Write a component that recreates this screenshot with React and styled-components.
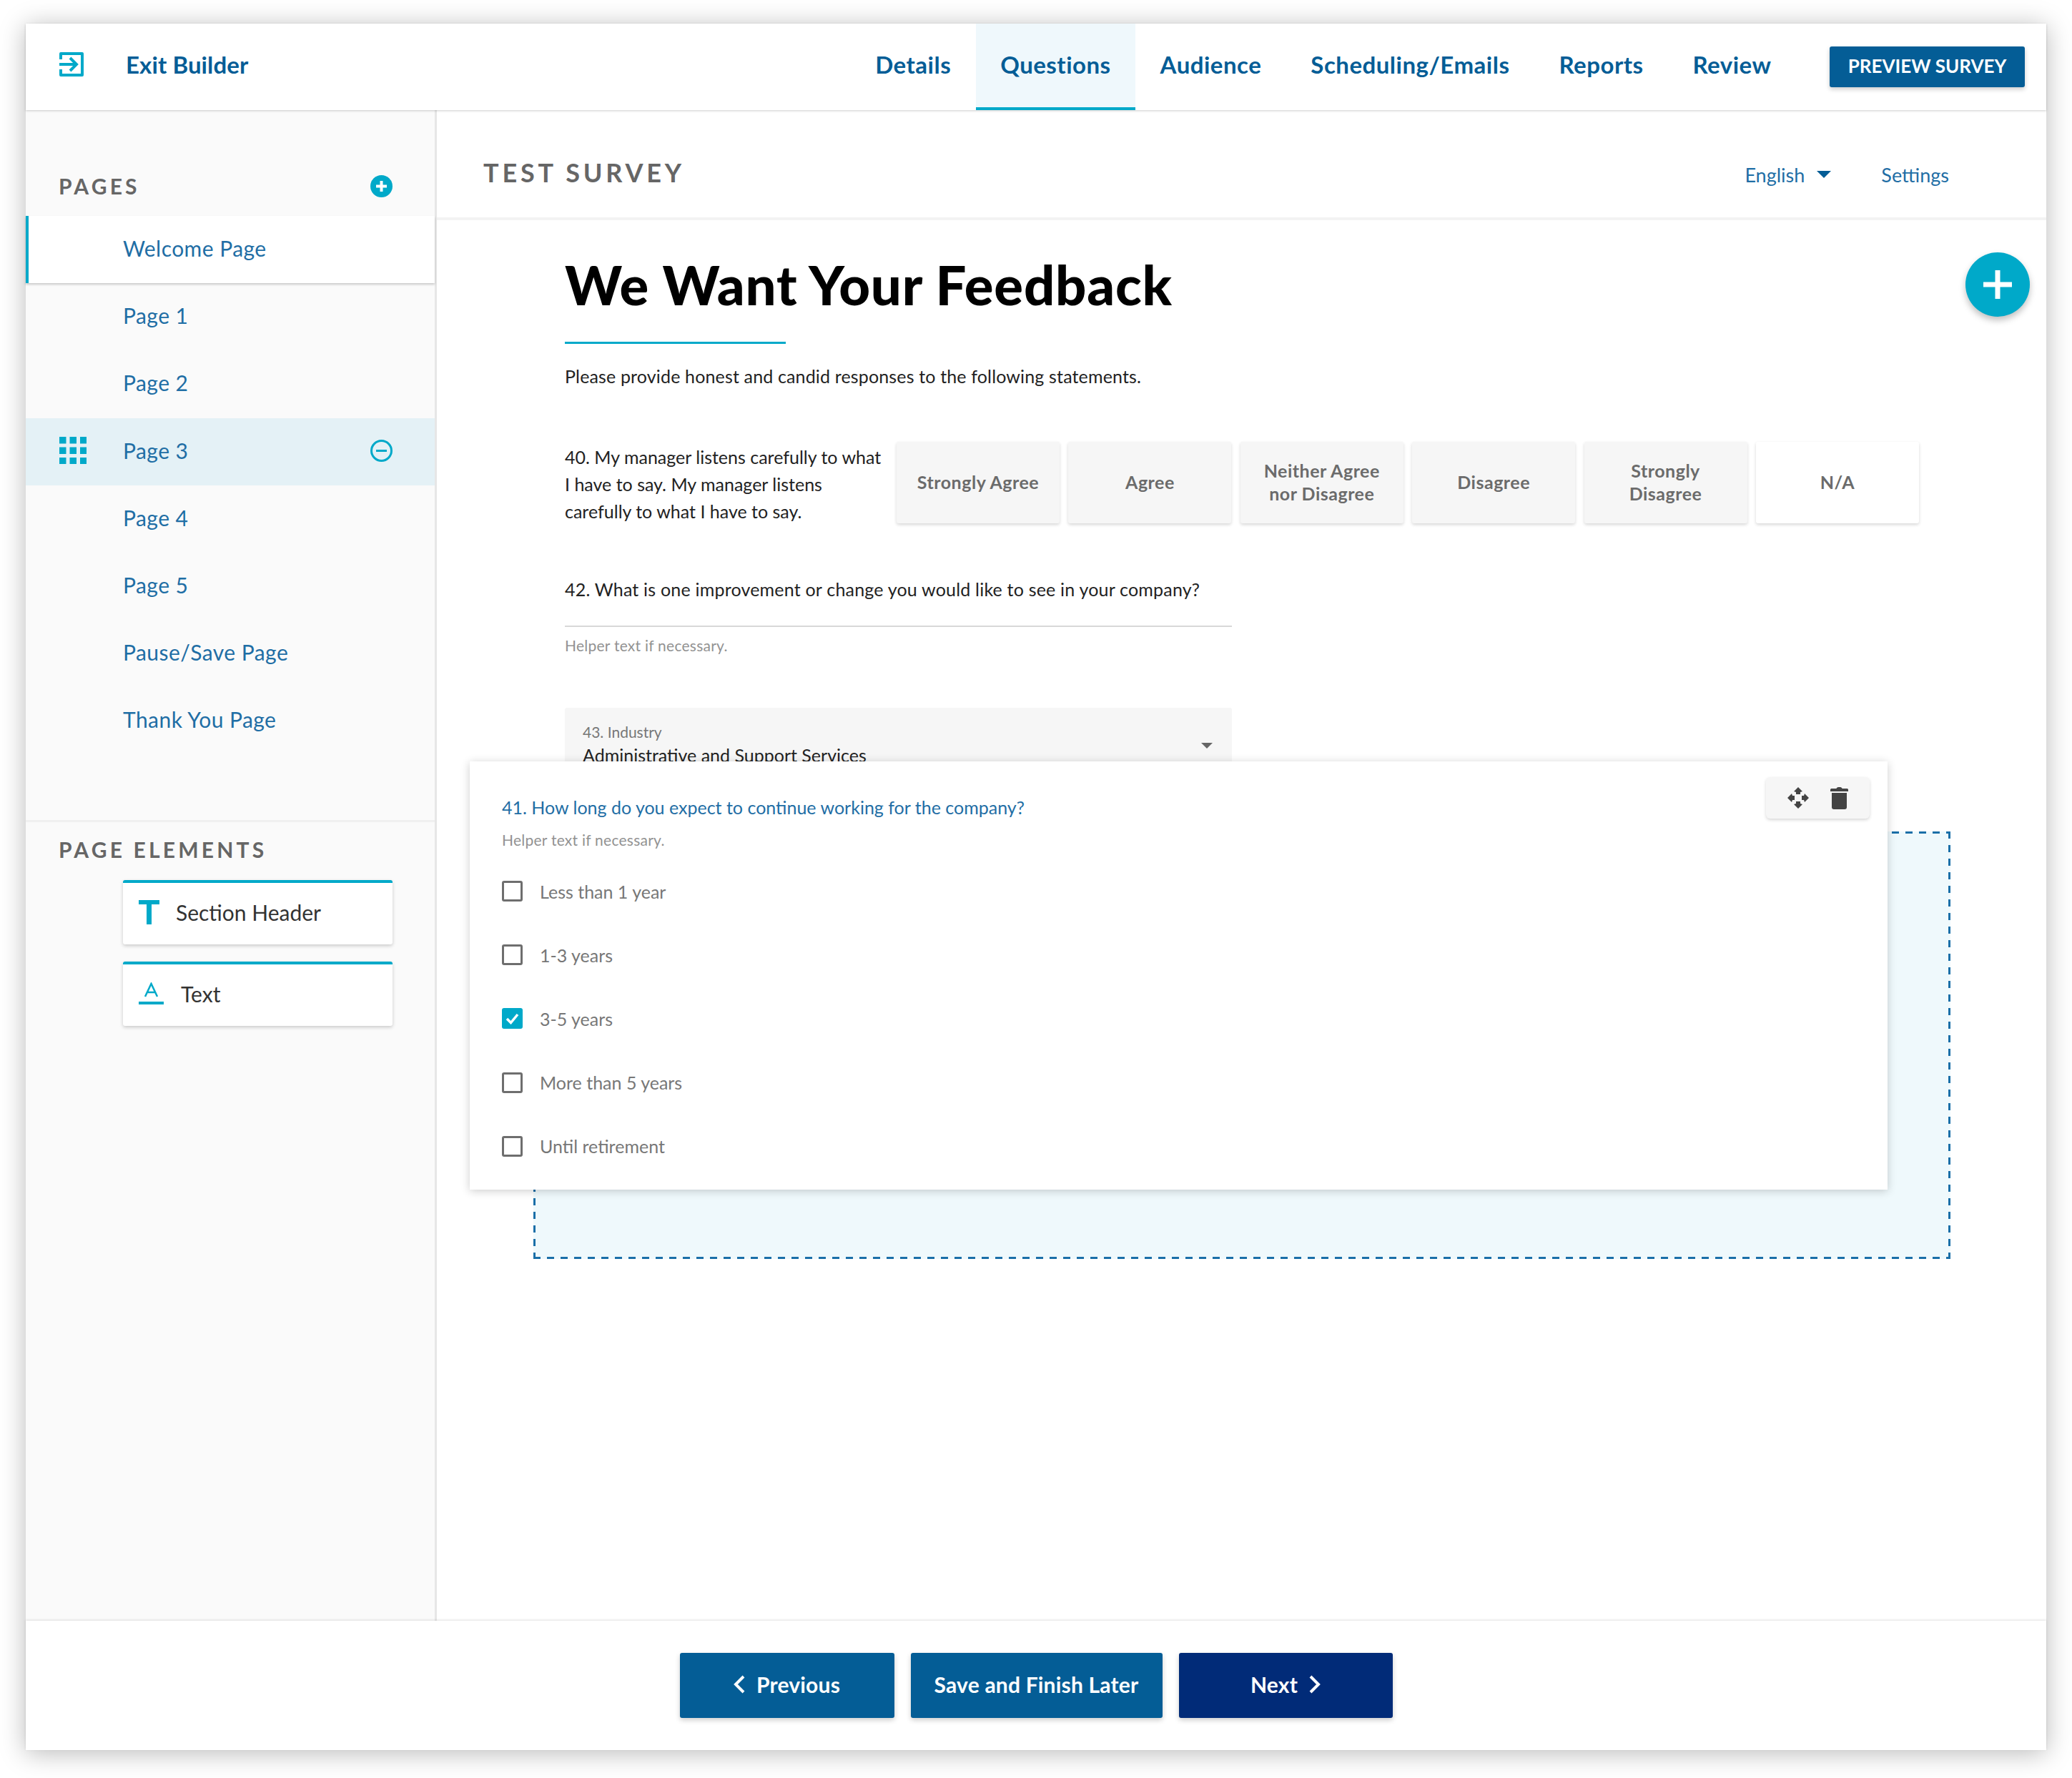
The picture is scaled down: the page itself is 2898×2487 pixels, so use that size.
import React from 'react';
import styled, { createGlobalStyle } from 'styled-components';

const GlobalStyle = createGlobalStyle`
    html, body {
        margin: 0;
        padding: 0;
        background: #fff;
        font-family: 'Lato', 'Open Sans', sans-serif;
    }
    * { box-sizing: border-box; }
`

const CYAN = '#00a9c9';
const BLUE = '#045d96';
const LINK = '#1f6ea5';
const DASH = '#1a6fa8';

const Frame = styled.div`
    width: 2826px;
    height: 2415px;
    margin: 33px 36px 39px;
    background: #fff;
    display: flex;
    flex-direction: column;
    box-shadow: 0 4px 34px rgba(0,0,0,0.28);
`

const Header = styled.header`
    height: 121px;
    flex: none;
    display: flex;
    align-items: center;
    padding: 0 30px 0 47px;
    background: #fff;
    box-shadow: 0 1px 3px rgba(0,0,0,0.2);
    position: relative;
    z-index: 3;
`

const Exit = styled.div`
    display: flex;
    align-items: center;
    gap: 59px;
    margin-top: -8px;
    color: ${BLUE};
    font-size: 33px;
    font-weight: 700;
    letter-spacing: 0.1px;
    flex: 1;
`

const Tabs = styled.nav`
    display: flex;
    height: 100%;
    margin-right: 47px;
`

const Tab = styled.div`
    display: flex;
    align-items: center;
    padding: 0 34.5px 8px;
    font-size: 33px;
    font-weight: 700;
    letter-spacing: 0.5px;
    color: ${BLUE};
    background: ${p => p.$active ? '#eff8fc' : 'transparent'};
    border-bottom: 4px solid ${p => p.$active ? CYAN : 'transparent'};
    border-top: 4px solid transparent;
`

const Preview = styled.button`
    width: 273px;
    height: 57px;
    padding: 0 0 3px;
    border: 0;
    border-radius: 3px;
    background: ${BLUE};
    color: #fff;
    font: 700 26px 'Lato', sans-serif;
    box-shadow: 0 3px 6px rgba(0,0,0,0.2);
`

const Body = styled.div`
    flex: 1;
    display: flex;
    min-height: 0;
`

const Sidebar = styled.aside`
    width: 575px;
    flex: none;
    background: #fafafa;
    border-right: 3px solid #e6e6e6;
`

const SideHead = styled.div`
    height: 148px;
    padding: 88px 59px 0 46px;
    display: flex;
    justify-content: space-between;
    align-items: center;
    align-content: flex-start;
    flex-wrap: wrap;
`

const SideTitle = styled.h2`
    margin: 0;
    font-size: 30px;
    line-height: 36px;
    font-weight: 700;
    letter-spacing: 4.2px;
    color: #666;
`

const PageRow = styled.div`
    height: 94.2px;
    display: flex;
    align-items: center;
    position: relative;
    padding: 0 0 4px ${p => p.$selected ? '132px' : '136px'};
    font-size: 30px;
    letter-spacing: 0.45px;
    color: ${LINK};
    background: ${p => p.$selected ? '#fff' : p.$hover ? '#e4f1f6' : 'transparent'};
    border-left: ${p => p.$selected ? `4px solid ${CYAN}` : '0'};
    box-shadow: ${p => p.$selected ? '0 2px 3px rgba(0,0,0,0.2)' : 'none'};
`

const Handle = styled.span`
    position: absolute;
    left: 47px;
    top: 26px;
    display: flex;
`

const RowAction = styled.span`
    position: absolute;
    right: 59px;
    top: 30px;
    display: flex;
`

const Elements = styled.section`
    margin-top: 91px;
    padding-top: 20px;
    border-top: 3px solid #f0f0f0;
`

const ElementsTitle = styled(SideTitle)`
    padding-left: 46px;
    height: 42px;
`

const ElementList = styled.div`
    margin: 19px 0 0 136px;
    width: 377px;
    display: flex;
    flex-direction: column;
    gap: 24px;
`

const ElementCard = styled.div`
    height: 90px;
    background: #fff;
    border-top: 4px solid ${CYAN};
    border-radius: 3px;
    box-shadow: 0 2px 5px rgba(0,0,0,0.2);
    display: flex;
    align-items: center;
    gap: ${p => p.$gap}px;
    padding: 0 0 3px 22px;
    font-size: 30px;
    color: #333;
`

const Main = styled.main`
    flex: 1;
    min-width: 0;
    background: #fff;
    display: flex;
    flex-direction: column;
`

const TopBar = styled.div`
    height: 154px;
    flex: none;
    display: flex;
    align-items: center;
    padding: 30px 136px 0 65px;
    border-bottom: 4px solid #f3f3f3;
`

const SurveyName = styled.h1`
    flex: 1;
    margin: -6px 0 0;
    font-size: 36px;
    font-weight: 700;
    letter-spacing: 4.8px;
    color: #666;
`

const TopLink = styled.span`
    display: flex;
    align-items: center;
    gap: 17px;
    margin-left: 70px;
    font-size: 27px;
    color: ${LINK};
`

const Caret = styled.span`
    width: 0;
    height: 0;
    border-left: ${p => p.$size}px solid transparent;
    border-right: ${p => p.$size}px solid transparent;
    border-top: ${p => p.$size}px solid ${p => p.$color};
`

const Content = styled.div`
    flex: 1;
    position: relative;
    padding: 52px 0 0 179px;
`

const Fab = styled.div`
    position: absolute;
    right: 23px;
    top: 45px;
    width: 90px;
    height: 90px;
    border-radius: 50%;
    background: ${CYAN};
    display: flex;
    align-items: center;
    justify-content: center;
    box-shadow: 0 5px 10px rgba(0,0,0,0.25);
`

const Title = styled.h1`
    margin: 0;
    font-size: 76px;
    line-height: 76px;
    font-weight: 900;
    letter-spacing: 0.8px;
    color: #000;
`

const Rule = styled.div`
    width: 309px;
    height: 3px;
    margin-top: 42px;
    background: ${CYAN};
`

const Intro = styled.p`
    margin: 27px 0 0;
    font-size: 25px;
    line-height: 36px;
    letter-spacing: 0.15px;
    color: #222;
`

const Likert = styled.div`
    display: flex;
    margin-top: 74px;
`

const Statement = styled.p`
    width: 448px;
    margin: 2px 16px 0 0;
    font-size: 25px;
    line-height: 38px;
    color: #222;
`

const Answers = styled.div`
    display: flex;
    gap: 12.4px;
`

const Answer = styled.div`
    width: 228px;
    height: 114px;
    display: flex;
    align-items: center;
    justify-content: center;
    text-align: center;
    padding: 0 24px 3px;
    font-size: 25px;
    line-height: 32px;
    font-weight: 700;
    letter-spacing: 0.5px;
    color: #6b6b6b;
    border-radius: 3px;
    background: ${p => p.$blank ? '#fff' : '#f6f6f6'};
    box-shadow: 0 2px 4px rgba(0,0,0,0.16);
`

const OpenQuestion = styled.div`
    width: 933px;
    margin-top: 71px;
`

const Prompt = styled.p`
    margin: 0;
    font-size: 25px;
    line-height: 38px;
    letter-spacing: 0.2px;
    color: #222;
`

const Underline = styled.div`
    height: 2px;
    margin-top: 32px;
    background: #d8d8d8;
`

const Helper = styled.p`
    margin: ${p => p.$top}px 0 0;
    font-size: 21px;
    line-height: 28px;
    letter-spacing: 0.25px;
    color: #929292;
`

const Select = styled.div`
    width: 933px;
    height: 106px;
    margin-top: 73px;
    padding: 19px 25px;
    position: relative;
    background: #f6f6f6;
    border-radius: 3px 3px 0 0;
`

const SelectLabel = styled.div`
    font-size: 21px;
    line-height: 30px;
    color: #777;
`

const SelectValue = styled.div`
    font-size: 25px;
    line-height: 34px;
    color: #222;
`

const SelectCaret = styled.span`
    position: absolute;
    right: 27px;
    top: 49px;
    display: flex;
`

// the dashes are longer than what a css dashed border gives
const DropZone = styled.div`
    width: 1982px;
    height: 598px;
    margin: 67px 0 0 -44px;
    background-color: #eff9fc;
    background-image:
        linear-gradient(to right, ${DASH} 10px, transparent 10px),
        linear-gradient(to right, ${DASH} 10px, transparent 10px),
        linear-gradient(to bottom, ${DASH} 10px, transparent 10px),
        linear-gradient(to bottom, ${DASH} 10px, transparent 10px);
    background-size: 19px 3px, 19px 3px, 3px 19px, 3px 19px;
    background-position: 0 0, 0 100%, 0 0, 100% 0;
    background-repeat: repeat-x, repeat-x, repeat-y, repeat-y;
`

const DragCard = styled.div`
    position: absolute;
    left: 46px;
    top: 757px;
    width: 1983px;
    height: 599px;
    padding: 45px 45px 0;
    background: #fff;
    box-shadow: 0 2px 12px rgba(0,0,0,0.2);
`

const CardTools = styled.div`
    position: absolute;
    right: 25px;
    top: 22px;
    width: 145px;
    height: 58px;
    padding-left: 30px;
    display: flex;
    align-items: center;
    gap: 30px;
    background: #f6f6f6;
    border-radius: 6px;
    box-shadow: 0 2px 4px rgba(0,0,0,0.16);
`

const CardTitle = styled.p`
    margin: 0;
    font-size: 25px;
    line-height: 38px;
    color: ${LINK};
`

const Options = styled.div`
    margin-top: 13px;
    display: flex;
    flex-direction: column;
`

const Option = styled.label`
    height: 89.2px;
    display: flex;
    align-items: center;
    gap: 24px;
    font-size: 25px;
    color: #777;
`

const Box = styled.span`
    width: 29px;
    height: 29px;
    display: flex;
    align-items: center;
    justify-content: center;
    border-radius: 3px;
    border: ${p => p.$checked ? '0' : '3px solid #6e6e6e'};
    background: ${p => p.$checked ? CYAN : '#fff'};
`

const Footer = styled.footer`
    height: 181px;
    flex: none;
    display: flex;
    justify-content: center;
    align-items: flex-start;
    gap: 23px;
    padding: 45px 0 0;
    background: #fff;
    box-shadow: 0 -1px 3px rgba(0,0,0,0.12);
    position: relative;
`

const FootButton = styled.button`
    width: ${p => p.$width}px;
    height: 91px;
    padding: 0 0 3px;
    border: 0;
    border-radius: 3px;
    background: ${p => p.$dark ? '#012b78' : BLUE};
    color: #fff;
    display: flex;
    align-items: center;
    justify-content: center;
    gap: 16px;
    font: 700 30px 'Lato', sans-serif;
    letter-spacing: 0.2px;
    box-shadow: 0 3px 7px rgba(0,0,0,0.2);
`

const ExitIcon = () => (
    <svg width="34" height="36" viewBox="0 0 34 36" fill="none" stroke={CYAN} strokeWidth="4">
        <path d="M2 11V3h30v30H2v-8" strokeLinejoin="round" />
        <path d="M0 18h24M15 9l9 9-9 9" />
    </svg>
);

const GridIcon = () => (
    <svg width="38" height="38" viewBox="0 0 38 38" fill={CYAN}>
        {[0, 14.5, 29].map(y => [0, 14.5, 29].map(x => (
            <rect key={`${x}-${y}`} x={x} y={y} width="9.5" height="9.5" />
        )))}
    </svg>
);

const PlusCircle = () => (
    <svg width="31" height="31" viewBox="0 0 31 31">
        <circle cx="15.5" cy="15.5" r="15.5" fill={CYAN} />
        <path d="M15.5 8v15M8 15.5h15" stroke="#fff" strokeWidth="4" />
    </svg>
);

const MinusCircle = () => (
    <svg width="31" height="31" viewBox="0 0 31 31" fill="none" stroke={CYAN} strokeWidth="3">
        <circle cx="15.5" cy="15.5" r="14" />
        <path d="M8 15.5h15" />
    </svg>
);

const HeaderIcon = () => (
    <svg width="30" height="34" viewBox="0 0 30 34" fill={CYAN}>
        <path d="M0 0h29v6H18v28h-7V6H0z" />
    </svg>
);

const TextIcon = () => (
    <svg width="35" height="32" viewBox="0 0 35 32" fill="none" stroke={CYAN}>
        <path d="M9 20l8.500-18 8.500 18M12 14h11" strokeWidth="2.500" />
        <path d="M0 29h35" strokeWidth="4" />
    </svg>
);

const MoveIcon = () => (
    <svg width="30" height="30" viewBox="0 0 30 30" fill="#444">
        <path d="M15 0l6 6-3 1v3h-6V7L9 6z" />
        <path d="M15 30l6-6-3-1v-3h-6v3l-3 1z" />
        <path d="M0 15l6-6 1 3h3v6H7l-1 3z" />
        <path d="M30 15l-6-6-1 3h-3v6h3l1 3z" />
    </svg>
);

const TrashIcon = () => (
    <svg width="25" height="31" viewBox="0 0 25 31" fill="#444">
        <path d="M0 3.500C0 2.500 1 2 2 2h6.500C9 .5 10 0 12.500 0S16 .5 16.500 2H23c1 0 2 .5 2 1.500V6H0z" />
        <path d="M2 8h21v20c0 2-1 3-3 3H5c-2 0-3-1-3-3z" />
    </svg>
);

const CheckIcon = () => (
    <svg width="19" height="16" viewBox="0 0 19 16" fill="none" stroke="#fff" strokeWidth="3.500">
        <path d="M2 8l5.500 5.500L17 2" />
    </svg>
);

const Chevron = ({ left }) => (
    <svg width="16" height="26" viewBox="0 0 16 26" fill="none" stroke="#fff" strokeWidth="4">
        <path d={left ? 'M14 2L3 13l11 11' : 'M2 2l11 11L2 24'} />
    </svg>
);

const tabs = ['Details', 'Questions', 'Audience', 'Scheduling/Emails', 'Reports', 'Review'];
const pages = ['Page 1', 'Page 2', 'Page 3', 'Page 4', 'Page 5', 'Pause/Save Page', 'Thank You Page'];
const answers = ['Strongly Agree', 'Agree', 'Neither Agree nor Disagree', 'Disagree', 'Strongly Disagree', 'N/A'];
const options = ['Less than 1 year', '1-3 years', '3-5 years', 'More than 5 years', 'Until retirement'];

const App = () => {
    return (
        <>
            <GlobalStyle />
            <Frame>
                <Header>
                    <Exit>
                        <ExitIcon />
                        <span>Exit Builder</span>
                    </Exit>
                    <Tabs>
                        {tabs.map(t => <Tab key={t} $active={t === 'Questions'}>{t}</Tab>)}
                    </Tabs>
                    <Preview>PREVIEW SURVEY</Preview>
                </Header>
                <Body>
                    <Sidebar>
                        <SideHead>
                            <SideTitle>PAGES</SideTitle>
                            <PlusCircle />
                        </SideHead>
                        <PageRow $selected>Welcome Page</PageRow>
                        {pages.map(p => (
                            <PageRow key={p} $hover={p === 'Page 3'}>
                                {p === 'Page 3' && <Handle><GridIcon /></Handle>}
                                {p}
                                {p === 'Page 3' && <RowAction><MinusCircle /></RowAction>}
                            </PageRow>
                        ))}
                        <Elements>
                            <ElementsTitle>PAGE ELEMENTS</ElementsTitle>
                            <ElementList>
                                <ElementCard $gap={22}><HeaderIcon />Section Header</ElementCard>
                                <ElementCard $gap={24}><TextIcon />Text</ElementCard>
                            </ElementList>
                        </Elements>
                    </Sidebar>
                    <Main>
                        <TopBar>
                            <SurveyName>TEST SURVEY</SurveyName>
                            <TopLink>English <Caret $size={10} $color={BLUE} /></TopLink>
                            <TopLink>Settings</TopLink>
                        </TopBar>
                        <Content>
                            <Fab>
                                <svg width="44" height="44" viewBox="0 0 44 44">
                                    <path d="M22 2v40M2 22h40" stroke="#fff" strokeWidth="7" />
                                </svg>
                            </Fab>
                            <Title>We Want Your Feedback</Title>
                            <Rule />
                            <Intro>Please provide honest and candid responses to the following statements.</Intro>
                            <Likert>
                                <Statement>40. My manager listens carefully to what I have to say. My manager listens carefully to what I have to say.</Statement>
                                <Answers>
                                    {answers.map(a => <Answer key={a} $blank={a === 'N/A'}>{a}</Answer>)}
                                </Answers>
                            </Likert>
                            <OpenQuestion>
                                <Prompt>42. What is one improvement or change you would like to see in your company?</Prompt>
                                <Underline />
                                <Helper $top={12}>Helper text if necessary.</Helper>
                            </OpenQuestion>
                            <Select>
                                <SelectLabel>43. Industry</SelectLabel>
                                <SelectValue>Administrative and Support Services</SelectValue>
                                <SelectCaret><Caret $size={8} $color="#666" /></SelectCaret>
                            </Select>
                            <DropZone />
                            <DragCard>
                                <CardTools>
                                    <MoveIcon />
                                    <TrashIcon />
                                </CardTools>
                                <CardTitle>41. How long do you expect to continue working for the company?</CardTitle>
                                <Helper $top={13}>Helper text if necessary.</Helper>
                                <Options>
                                    {options.map(o => (
                                        <Option key={o}>
                                            <Box $checked={o === '3-5 years'}>
                                                {o === '3-5 years' && <CheckIcon />}
                                            </Box>
                                            {o}
                                        </Option>
                                    ))}
                                </Options>
                            </DragCard>
                        </Content>
                    </Main>
                </Body>
                <Footer>
                    <FootButton $width={300}><Chevron left />Previous</FootButton>
                    <FootButton $width={352}>Save and Finish Later</FootButton>
                    <FootButton $width={299} $dark>Next<Chevron /></FootButton>
                </Footer>
            </Frame>
        </>
    );
};

export default App;
